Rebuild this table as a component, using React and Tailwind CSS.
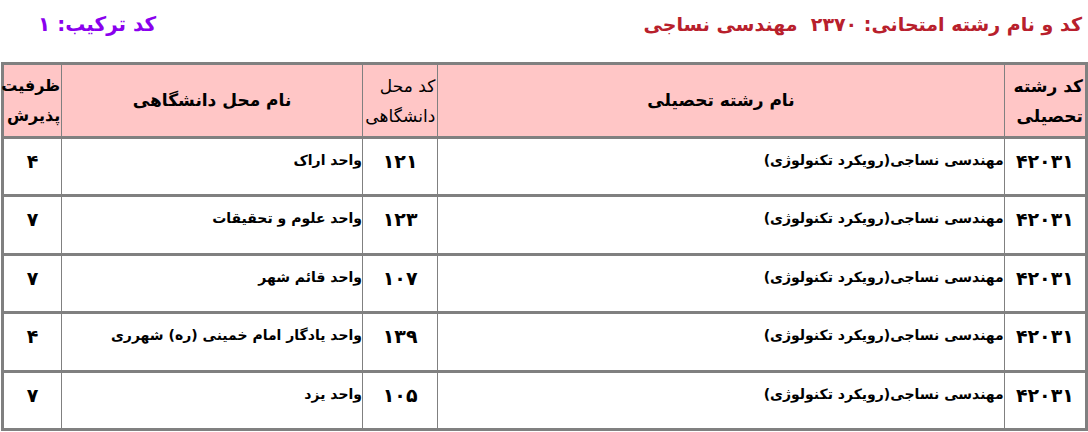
import React from "react";

const rows = [
  { code: "۴۲۰۳۱", field: "مهندسی نساجی(رویکرد تکنولوژی)", uniCode: "۱۲۱", uni: "واحد اراک", cap: "۴" },
  { code: "۴۲۰۳۱", field: "مهندسی نساجی(رویکرد تکنولوژی)", uniCode: "۱۲۳", uni: "واحد علوم و تحقیقات", cap: "۷" },
  { code: "۴۲۰۳۱", field: "مهندسی نساجی(رویکرد تکنولوژی)", uniCode: "۱۰۷", uni: "واحد قائم شهر", cap: "۷" },
  { code: "۴۲۰۳۱", field: "مهندسی نساجی(رویکرد تکنولوژی)", uniCode: "۱۳۹", uni: "واحد یادگار امام خمینی (ره) شهرری", cap: "۴" },
  { code: "۴۲۰۳۱", field: "مهندسی نساجی(رویکرد تکنولوژی)", uniCode: "۱۰۵", uni: "واحد یزد", cap: "۷" },
];

// alternate 58/59 so five rows land on the same lines as the original sheet
const rowHeights = ["h-[58px]", "h-[59px]", "h-[58px]", "h-[59px]", "h-[58px]"];

export default function App() {
  return (
    <div
      dir="rtl"
      className="w-[1088px] h-[432px] bg-white overflow-hidden"
      style={{ fontFamily: '"DejaVu Sans", Tahoma, sans-serif' }}
    >
      {/* titles */}
      <div className="flex justify-between items-center h-[62px] pr-[6px] pl-[38px] pb-[14px]">
        <h1 className="text-[19px] font-bold text-[#b8202c]">
          کد و نام رشته امتحانی: ۲۳۷۰&nbsp;&nbsp;مهندسی نساجی
        </h1>
        <h2 className="text-[20px] font-bold text-[#8a00ee]">کد ترکیب: ۱</h2>
      </div>

      <table className="table-fixed border-collapse w-[1087px] border-[3px] border-[#808080] text-black">
        <colgroup>
          <col className="w-[82px]" />
          <col className="w-[565px]" />
          <col className="w-[75px]" />
          <col className="w-[300px]" />
          <col className="w-[59px]" />
        </colgroup>
        <thead>
          <tr className="h-[74px] bg-[#ffc6c6] border-b-[3px] border-[#808080]">
            <th className="border-x border-[#808080] text-right font-bold text-[17px] leading-[30px] px-[2px]">
              کد رشته
              <br />
              تحصیلی
            </th>
            <th className="border-x border-[#808080] text-center font-bold text-[17px]">نام رشته تحصیلی</th>
            <th className="border-x border-[#808080] text-right font-normal text-[17px] leading-[30px] px-[2px]">
              کد محل
              <br />
              دانشگاهی
            </th>
            <th className="border-x border-[#808080] text-center font-bold text-[17px]">نام محل دانشگاهی</th>
            <th className="border-x border-[#808080] text-right font-bold text-[16px] leading-[30px] px-[1px]">
              ظرفیت
              <br />
              پذیرش
            </th>
          </tr>
        </thead>
        <tbody>
          {rows.map((r, i) => (
            <tr key={i} className={`${rowHeights[i]} border-b-[3px] border-[#808080] align-top`}>
              <td className="border-x border-[#808080] text-center font-bold text-[19px] pt-[8px]">{r.code}</td>
              <td className="border-x border-[#808080] text-right font-bold text-[14px] pt-[11px]">{r.field}</td>
              <td className="border-x border-[#808080] text-center font-bold text-[19px] pt-[8px]">{r.uniCode}</td>
              <td className="border-x border-[#808080] text-right font-bold text-[14px] pt-[11px]">{r.uni}</td>
              <td className="border-x border-[#808080] text-center font-bold text-[19px] pt-[8px]">{r.cap}</td>
            </tr>
          ))}
        </tbody>
      </table>
    </div>
  );
}
